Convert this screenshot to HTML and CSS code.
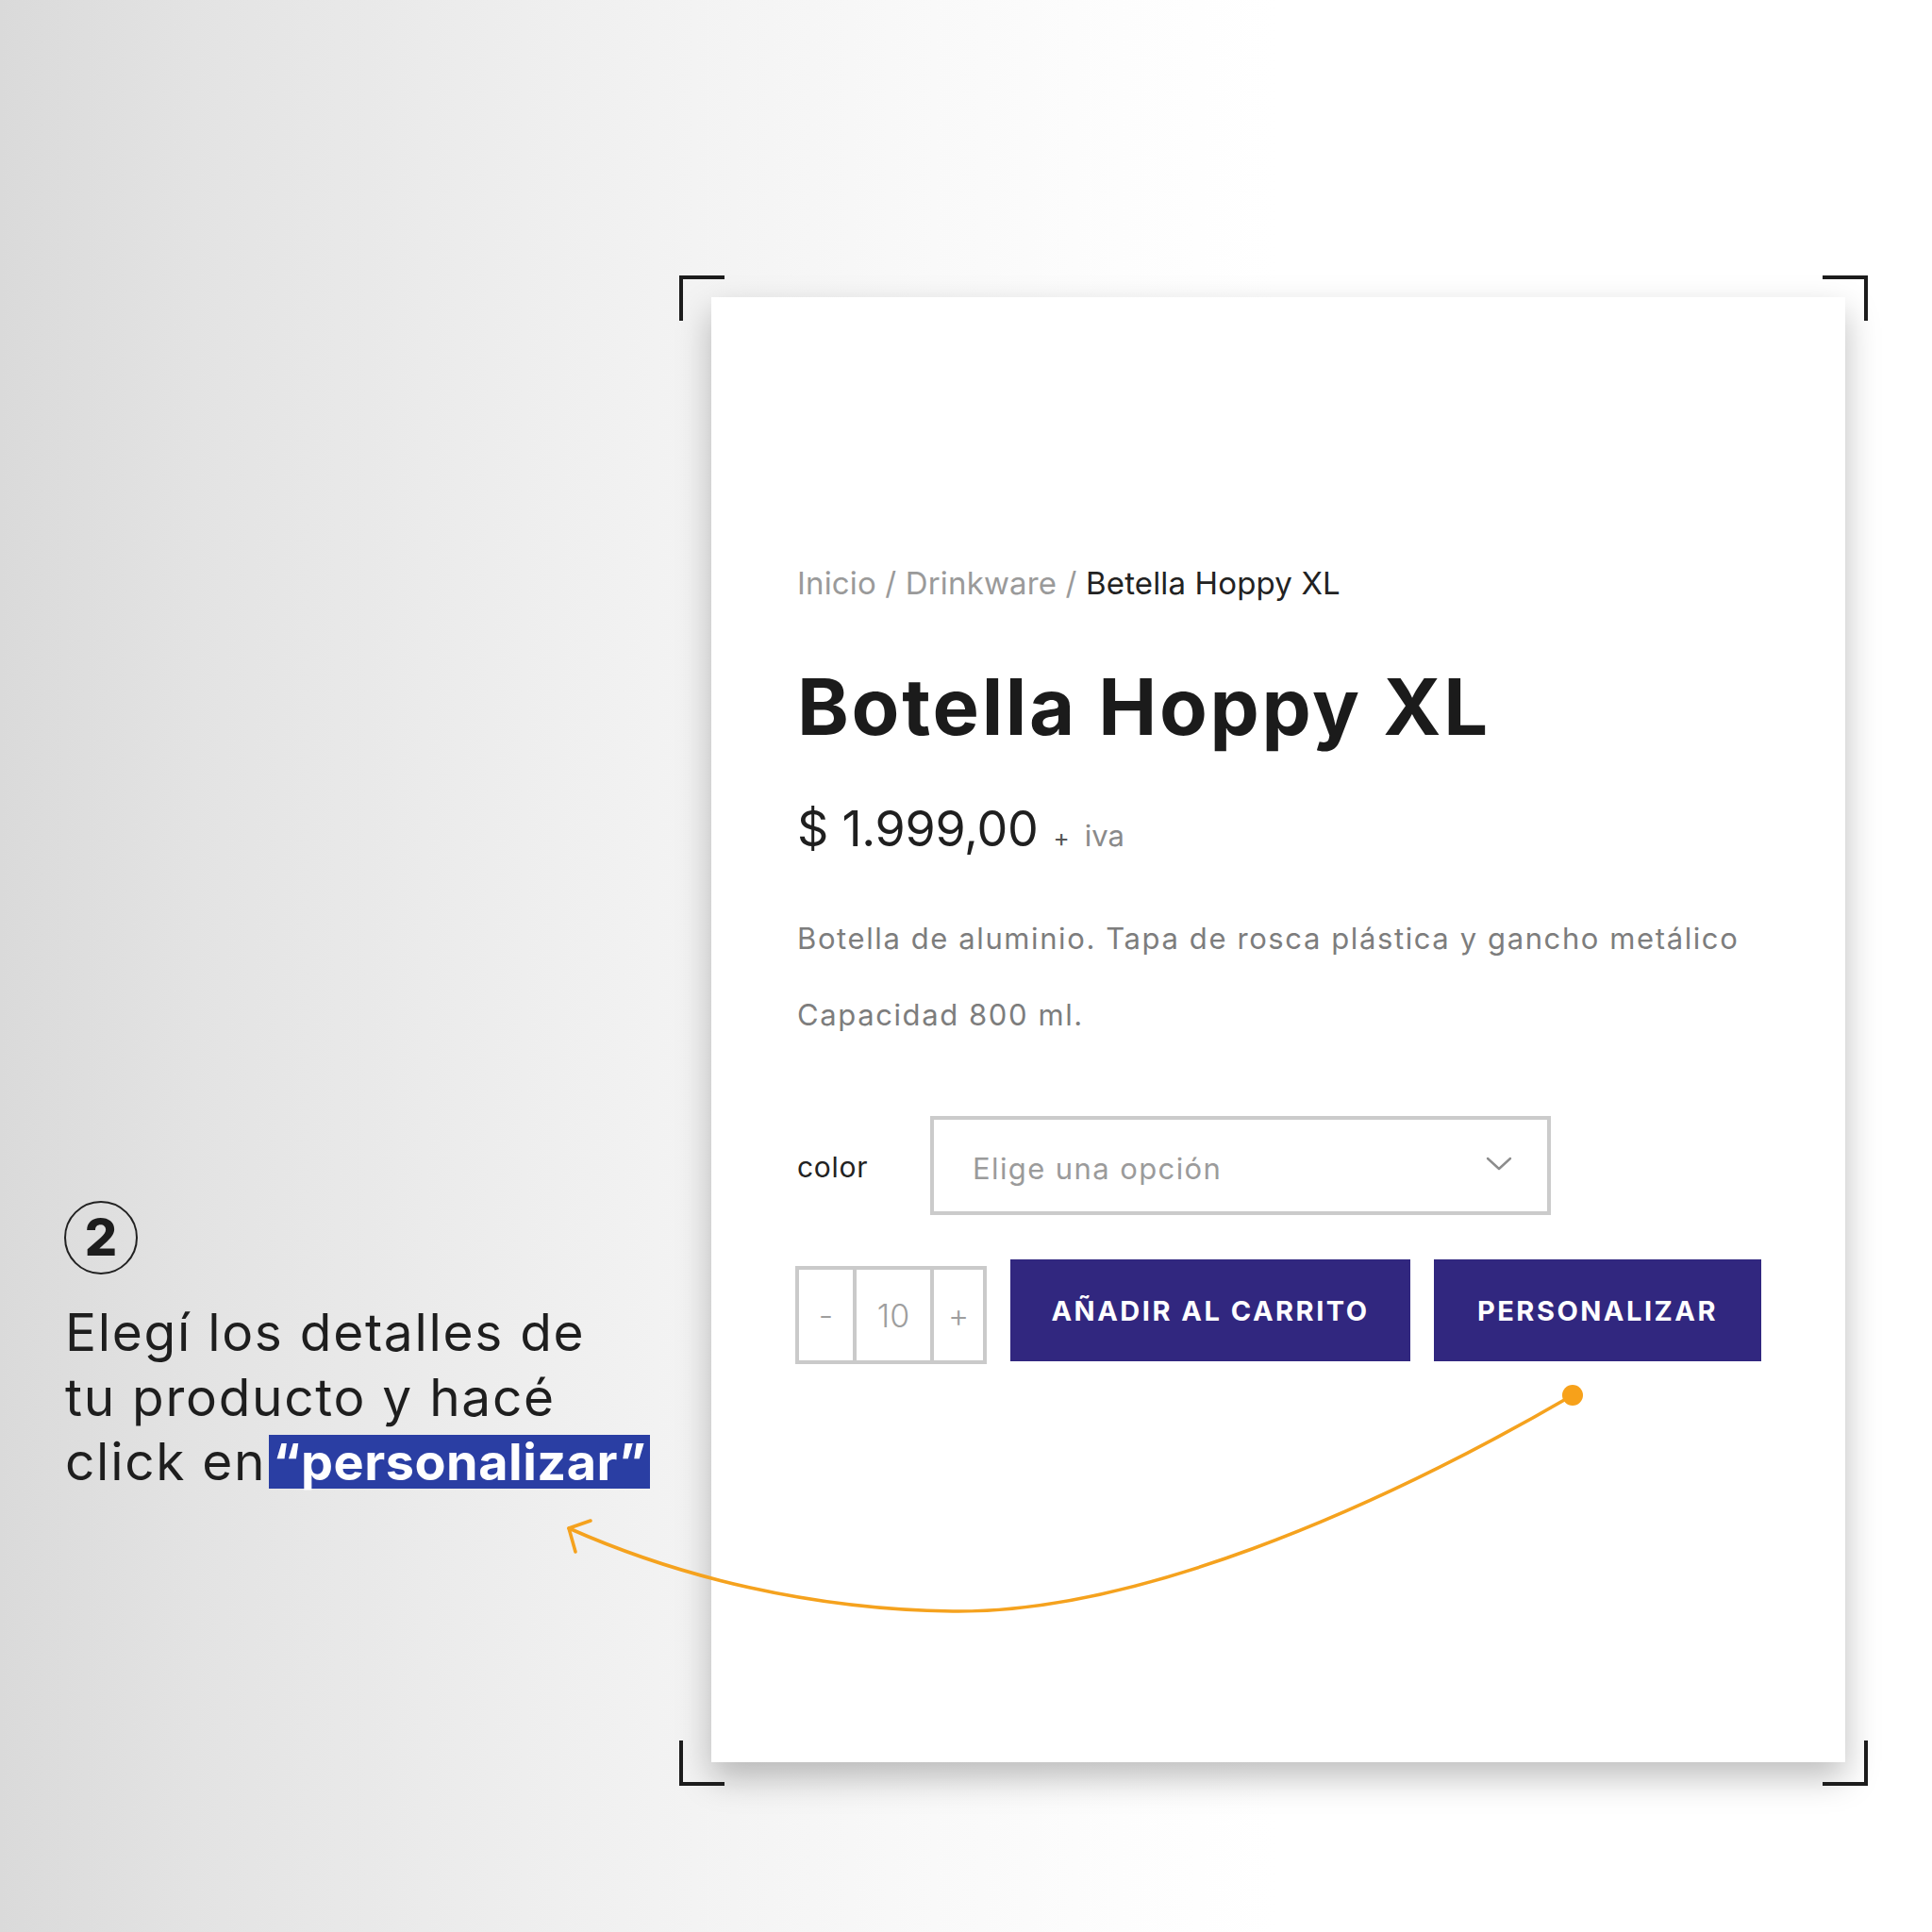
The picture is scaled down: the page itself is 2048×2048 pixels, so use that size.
FILE: index.html
```html
<!DOCTYPE html>
<html lang="es">
<head>
<meta charset="utf-8">
<title>Botella Hoppy XL</title>
<link rel="stylesheet" href="styles.css">
</head>
<body>
<main class="stage">
  <section class="callout">
    <div class="step">2</div>
    <p class="callout-text">Elegí los detalles de<br>tu producto y hacé<br>click en<span class="hl">“personalizar”</span></p>
  </section>

  <div class="frame">
    <span class="corner tl"></span>
    <span class="corner tr"></span>
    <span class="corner bl"></span>
    <span class="corner br"></span>
    <article class="card">
      <nav class="crumbs"><span class="muted">Inicio / Drinkware / </span><span class="current">Betella Hoppy XL</span></nav>
      <h1 class="title">Botella Hoppy XL</h1>
      <div class="price"><span class="amount">$ 1.999,00</span><span class="plus">+</span><span class="iva">iva</span></div>
      <div class="desc">
        <p>Botella de aluminio. Tapa de rosca plástica y gancho metálico</p>
        <p>Capacidad 800 ml.</p>
      </div>
      <div class="variation">
        <span class="label">color</span>
        <div class="select">
          <span>Elige una opción</span>
          <svg class="chev" width="28" height="15" viewBox="0 0 28 15"><polyline points="2,2 14,13 26,2" fill="none" stroke="#8c8c8c" stroke-width="2.4" stroke-linecap="round" stroke-linejoin="round"/></svg>
        </div>
      </div>
      <div class="actions">
        <div class="qty"><span class="q-minus">-</span><span class="q-val">10</span><span class="q-plus">+</span></div>
        <button class="btn add">AÑADIR AL CARRITO</button>
        <button class="btn custom">PERSONALIZAR</button>
      </div>
    </article>
  </div>

  <svg class="arrow" width="2048" height="2048" viewBox="0 0 2048 2048">
    <path d="M1667 1479 C1450 1605 1200 1710 1010 1708 C860 1706 720 1672 603 1620" fill="none" stroke="#f5a21e" stroke-width="3.6" stroke-linecap="round"/>
    <polyline points="626,1612 603,1620 610,1645" fill="none" stroke="#f5a21e" stroke-width="3.6" stroke-linecap="round" stroke-linejoin="round"/>
    <circle cx="1667" cy="1479" r="11" fill="#f7a11a"/>
  </svg>
</main>
</body>
</html>
```

FILE: styles.css
```css
html, body {
  margin: 0;
  padding: 0;
}

.stage {
  position: relative;
  width: 2048px;
  height: 2048px;
  box-sizing: border-box;
  padding: 292px 0 0 68px;
  display: flex;
  align-items: flex-start;
  background: linear-gradient(to right, #dadada 0%, #e3e3e3 10%, #ebebeb 22%, #f2f2f2 34%, #f8f8f8 46%, #fdfdfd 58%, #ffffff 66%);
  font-family: Inter, "Noto Sans", sans-serif;
  overflow: hidden;
}

/* left callout */
.callout {
  width: 652px;
  margin-top: 981px;
}

.step {
  width: 78px;
  height: 78px;
  box-sizing: border-box;
  border: 2.5px solid #222;
  border-radius: 50%;
  display: flex;
  align-items: center;
  justify-content: center;
  font-size: 54px;
  font-weight: 800;
  line-height: 1;
  color: #1d1d1d;
}

.callout-text {
  margin: 27px 0 0 1px;
  font-size: 55px;
  line-height: 68.5px;
  color: #1e1e1e;
  letter-spacing: 1.7px;
  white-space: nowrap;
}

.hl {
  display: inline-block;
  height: 57px;
  line-height: 57px;
  margin-left: 3px;
  padding: 0 4px;
  background: #2a3ea3;
  color: #fff;
  font-size: 54px;
  font-weight: 700;
  letter-spacing: 0.5px;
}

/* frame + corners */
.frame {
  position: relative;
  width: 1260px;
  height: 1601px;
  box-sizing: border-box;
  padding: 23px 24px 25px 34px;
}

.corner {
  position: absolute;
  width: 48px;
  height: 48px;
  box-sizing: border-box;
  border: 0 solid #1c1c1c;
}
.tl { top: 0; left: 0; border-top-width: 4px; border-left-width: 4px; }
.tr { top: 0; right: 0; border-top-width: 4px; border-right-width: 4px; }
.bl { bottom: 0; left: 0; border-bottom-width: 4px; border-left-width: 4px; }
.br { bottom: 0; right: 0; border-bottom-width: 4px; border-right-width: 4px; }

.card {
  width: 1202px;
  height: 1553px;
  box-sizing: border-box;
  padding: 287px 0 0 91px;
  background: #fff;
  box-shadow: 0 16px 34px rgba(0, 0, 0, 0.26);
}

.crumbs {
  font-size: 33px;
  line-height: 33px;
  color: #9a9a9a;
  letter-spacing: 0.15px;
}
.current { color: #222; }

.title {
  margin: 74px 0 0;
  font-size: 83px;
  line-height: 81px;
  font-weight: 700;
  color: #1b1b1b;
  letter-spacing: 2.7px;
}

.price {
  margin-top: 63px;
  height: 52px;
  display: flex;
  align-items: baseline;
  line-height: 52px;
}
.amount {
  font-size: 52px;
  color: #1f1f1f;
  letter-spacing: -0.3px;
}
.plus {
  font-size: 26px;
  color: #555;
  margin-left: 16px;
}
.iva {
  font-size: 31px;
  color: #8a8a8a;
  margin-left: 16px;
}

.desc {
  margin-top: 49px;
  font-size: 31px;
  line-height: 81px;
  color: #7d7d7d;
  letter-spacing: 1.6px;
}
.desc p { margin: 0; }

.variation {
  margin-top: 67px;
  display: flex;
  align-items: center;
}
.label {
  width: 141px;
  font-size: 30px;
  color: #222;
  margin-top: 2px;
  letter-spacing: 0.7px;
}
.select {
  width: 658px;
  height: 105px;
  box-sizing: border-box;
  border: 4px solid #cbcbcb;
  padding: 0 37px 0 41px;
  display: flex;
  align-items: center;
  justify-content: space-between;
  font-size: 31px;
  color: #9b9b9b;
  letter-spacing: 1.4px;
}
.select span { margin-top: 6px; }
.chev { margin-top: -4px; }

.actions {
  margin-top: 47px;
  margin-left: -2px;
  display: flex;
  align-items: flex-start;
}
.qty {
  margin-top: 7px;
  height: 104px;
  display: flex;
  box-sizing: border-box;
  border: 4px solid #cacaca;
}
.qty span {
  box-sizing: border-box;
  display: flex;
  align-items: center;
  justify-content: center;
  font-size: 34px;
  font-weight: 300;
  color: #9e9e9e;
}
.q-minus { width: 57px; }
.q-val { width: 82px; border-left: 4px solid #cacaca; }
.q-plus { width: 56px; border-left: 4px solid #cacaca; }

.btn {
  height: 108px;
  margin-left: 25px;
  padding: 0;
  border: 0;
  background: #31277f;
  color: #fff;
  font-family: Inter, "Noto Sans", sans-serif;
  font-size: 29px;
  font-weight: 700;
  letter-spacing: 2.5px;
}
.add { width: 424px; }
.custom { width: 347px; }

.arrow {
  position: absolute;
  top: 0;
  left: 0;
  pointer-events: none;
}
```
